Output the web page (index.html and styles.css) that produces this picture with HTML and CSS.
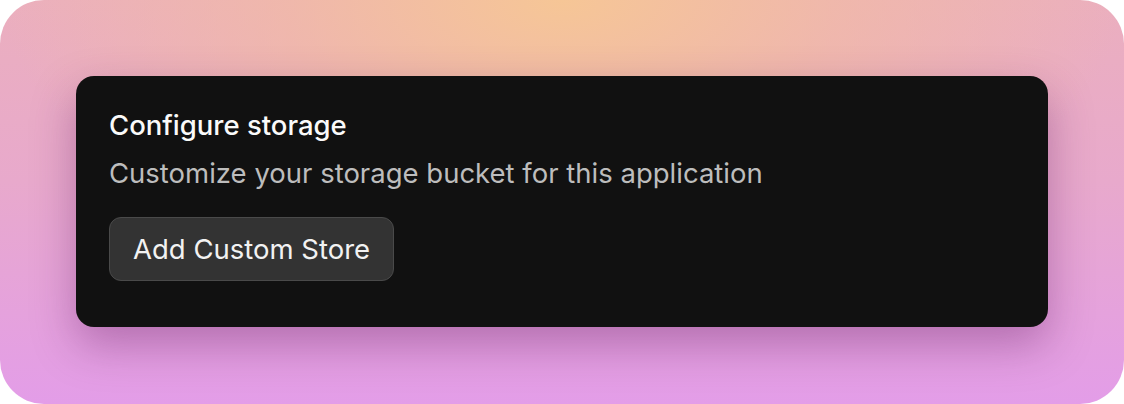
FILE: index.html
```html
<!DOCTYPE html>
<html>
<head>
<meta charset="utf-8">
<link rel="stylesheet" href="styles.css">
</head>
<body>
<div class="frame">
  <div class="card">
    <h2 class="title">Configure storage</h2>
    <p class="desc">Customize your storage bucket for this application</p>
    <button class="btn">Add Custom Store</button>
  </div>
</div>
</body>
</html>
```
FILE: styles.css
```css
html, body {
  margin: 0;
  padding: 0;
  background: #fff;
}
body {
  font-family: Inter, "Noto Sans", sans-serif;
}
.frame {
  width: 1124px;
  height: 404px;
  box-sizing: border-box;
  border-radius: 44px;
  padding: 76px;
  background:
    radial-gradient(ellipse 560px 270px at 50% 0%, rgba(246,198,150,1) 0%, rgba(242,188,162,0.65) 50%, rgba(236,176,190,0) 100%),
    linear-gradient(180deg, #ebafbe 0%, #e8a9cc 45%, #e39de8 100%);
}
.card {
  height: 251px;
  box-sizing: border-box;
  background: #111111;
  border-radius: 18px;
  padding: 32px 33px;
  box-shadow: 0 18px 44px rgba(100, 30, 100, 0.38);
}
.title {
  margin: 0;
  font-size: 27.5px;
  font-weight: 450;
  line-height: 34px;
  color: #fafafa;
}
.desc {
  margin: 14px 0 0;
  font-size: 27.5px;
  font-weight: 400;
  line-height: 34px;
  color: #bdbdbd;
}
.btn {
  display: block;
  margin-top: 27px;
  font-family: inherit;
  font-size: 27.5px;
  font-weight: 400;
  color: #f2f2f2;
  background: #333333;
  border: 1px solid #4a4a4a;
  border-radius: 12px;
  height: 64px;
  padding: 0 23px;
}
```
